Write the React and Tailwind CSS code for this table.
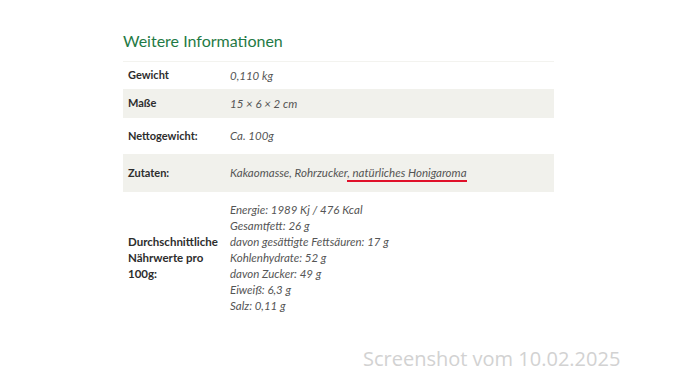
const rows = [
  { label: 'Gewicht', value: '0,110 kg', h: 'h-[27px]', bg: 'bg-white' },
  { label: 'Maße', value: '15 × 6 × 2 cm', h: 'h-[29px]', bg: 'bg-[#f1f1ec]' },
  { label: 'Nettogewicht:', value: 'Ca. 100g', h: 'h-[36px]', bg: 'bg-white' },
];

const naehrwerte = [
  'Energie: 1989 Kj / 476 Kcal',
  'Gesamtfett: 26 g',
  'davon gesättigte Fettsäuren: 17 g',
  'Kohlenhydrate: 52 g',
  'davon Zucker: 49 g',
  'Eiweiß: 6,3 g',
  'Salz: 0,11 g',
];

export default function App() {
  return (
    <div className="w-[686px] h-[382px] bg-white relative overflow-hidden font-['Lato',sans-serif]">
      <div className="pl-[123px] pt-[30px] w-[554px]">
        <h2 className="text-[16px] leading-[22px] text-[#1f7a45] font-normal">
          Weitere Informationen
        </h2>

        <div className="mt-[9px] border-t border-[#f3f3ef] text-[11px] text-[#333]">
          {rows.map((r) => (
            <div key={r.label} className={`flex items-center ${r.h} ${r.bg}`}>
              <div className="w-[107px] pl-[5px] font-bold text-[#2d2d2d]">{r.label}</div>
              <div className="italic text-[11.5px] text-[#555]">{r.value}</div>
            </div>
          ))}

          {/* Zutaten */}
          <div className="flex items-center h-[38px] bg-[#f1f1ec]">
            <div className="w-[107px] pl-[5px] font-bold text-[#2d2d2d]">Zutaten:</div>
            <div className="italic text-[11.5px] text-[#555]">
              Kakaomasse, Rohrzucker
              <span className="border-b-2 border-[#e0102a] pb-[1px]">, natürliches Honigaroma </span>
            </div>
          </div>

          {/* Nährwerte */}
          <div className="flex items-center py-[10px] bg-white">
            <div className="w-[107px] pl-[5px] pr-[2px] font-bold text-[11.5px] text-[#2d2d2d] leading-[16px]">
              Durchschnittliche Nährwerte pro 100g:
            </div>
            <div className="italic text-[11.5px] text-[#555] leading-[16px]">
              {naehrwerte.map((n) => (
                <div key={n}>{n}</div>
              ))}
            </div>
          </div>
        </div>
      </div>

      <div className="absolute left-[363px] top-[345px] text-[20px] leading-[28px] text-[#d2d2d2] font-['Open_Sans',sans-serif]">
        Screenshot vom 10.02.2025
      </div>
    </div>
  );
}
